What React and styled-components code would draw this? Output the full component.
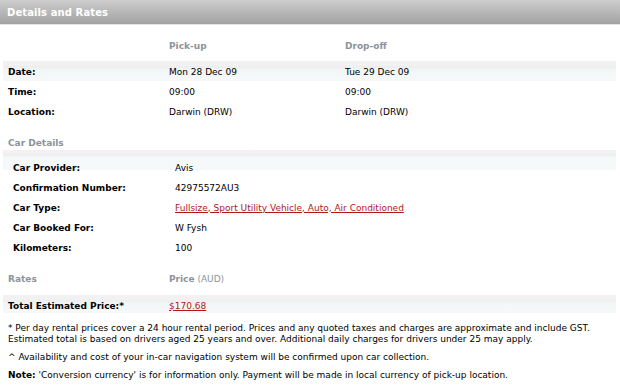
import React from "react";
import styled, { createGlobalStyle } from "styled-components";

const Global = createGlobalStyle`
  html, body { margin: 0; padding: 0; background: #fff; }
  body { font-family: "DejaVu Sans", Verdana, sans-serif; color: #000; }
`;

const Page = styled.div`
  width: 620px;
  height: 385px;
  overflow: hidden;
  background: #fff;
`;

const TitleBar = styled.div`
  height: 24px;
  display: flex;
  align-items: center;
  padding-left: 7px;
  background: linear-gradient(#cdcdcd, #a2a2a2);
  border-bottom: 1px solid #e4e4e4;
  color: #fff;
  font-weight: bold;
  font-size: 10px;
  letter-spacing: 0.1px;
`;

const Body = styled.div`
  padding: 0 4px 0 3px;
`;

const bandBg = "linear-gradient(#f1f1f1 0, #f2f2f2 25%, #ececec 26%, #f3f6f6 45%, #f5f9f9 100%)";

const Row = styled.div`
  display: grid;
  grid-template-columns: ${(p) => (p.$indent ? "162px 176px 1fr" : "161px 176px 1fr")};
  align-items: ${(p) => (p.$end ? "end" : "center")};
  height: ${(p) => p.$h || 20}px;
  box-sizing: border-box;
  padding-left: ${(p) => (p.$indent ? 10 : 5)}px;
  padding-top: ${(p) => p.$pt || 0}px;
  padding-bottom: ${(p) => p.$pb || 0}px;
  margin-top: ${(p) => p.$mt || 0}px;
  font-size: 9px;
  background: ${(p) =>
    p.$band
      ? bandBg
      : p.$bandTail
      ? "linear-gradient(#f4f8f8 0, #f5f9f9 13px, transparent 13px)"
      : "none"};
`;

const Label = styled.span`
  font-weight: bold;
`;

const Value = styled.span`
  grid-column: ${(p) => (p.$wide ? "2 / 4" : "auto")};
`;

const ColHead = styled.span`
  color: #8b939b;
  font-weight: ${(p) => (p.$light ? "normal" : "bold")};
`;

const Section = styled.div`
  height: ${(p) => p.$h}px;
  box-sizing: border-box;
  display: flex;
  align-items: flex-end;
  padding: 0 0 ${(p) => p.$pb || 0}px 5px;
  font-size: 9px;
  color: #8b939b;
  font-weight: bold;
`;

const Link = styled.a`
  color: #b0181c;
  text-decoration: underline;
  cursor: pointer;
`;

const Notes = styled.div`
  padding: 10px 0 0 5px;
  font-size: 9px;
  line-height: 11px;
  display: flex;
  flex-direction: column;
  gap: 7px;
`;

const Note = styled.p`
  margin: 0;
`;

export default function App() {
  return (
    <Page>
      <Global />
      <TitleBar>Details and Rates</TitleBar>
      <Body>
        <Row $h={36} $end $pb={10}>
          <span />
          <ColHead>Pick-up</ColHead>
          <ColHead>Drop-off</ColHead>
        </Row>
        <Row $band $pt={2}>
          <Label>Date:</Label>
          <Value>Mon 28 Dec 09</Value>
          <Value>Tue 29 Dec 09</Value>
        </Row>
        <Row $pt={2}>
          <Label>Time:</Label>
          <Value>09:00</Value>
          <Value>09:00</Value>
        </Row>
        <Row $pt={2}>
          <Label>Location:</Label>
          <Value>Darwin (DRW)</Value>
          <Value>Darwin (DRW)</Value>
        </Row>
        <Section $h={28} $pb={1}>Car Details</Section>
        <Row $h={7} $mt={1} style={{ background: "linear-gradient(#f1f1f1 0, #f2f2f2 60%, #ececec 61%, #f3f6f6 100%)" }} />
        <Row $indent $bandTail $pt={1}>
          <Label>Car Provider:</Label>
          <Value>Avis</Value>
        </Row>
        <Row $indent $pt={1}>
          <Label>Confirmation Number:</Label>
          <Value>42975572AU3</Value>
        </Row>
        <Row $indent $pt={1}>
          <Label>Car Type:</Label>
          <Value $wide>
            <Link>Fullsize, Sport Utility Vehicle, Auto, Air Conditioned</Link>
          </Value>
        </Row>
        <Row $indent $pt={1}>
          <Label>Car Booked For:</Label>
          <Value>W Fysh</Value>
        </Row>
        <Row $indent $pt={1}>
          <Label>Kilometers:</Label>
          <Value>100</Value>
        </Row>
        <Row $h={31} $end $pb={4}>
          <ColHead>Rates</ColHead>
          <span>
            <ColHead>Price</ColHead> <ColHead $light>(AUD)</ColHead>
          </span>
        </Row>
        <Row $band $h={18} $mt={7} $pt={3}>
          <Label>Total Estimated Price:*</Label>
          <Value>
            <Link>$170.68</Link>
          </Value>
        </Row>
        <Notes>
          <Note>
            * Per day rental prices cover a 24 hour rental period. Prices and any quoted taxes and charges are approximate and include GST.
            <br />
            Estimated total is based on drivers aged 25 years and over. Additional daily charges for drivers under 25 may apply.
          </Note>
          <Note>^ Availability and cost of your in-car navigation system will be confirmed upon car collection.</Note>
          <Note>
            <Label>Note:</Label> 'Conversion currency' is for information only. Payment will be made in local currency of pick-up location.
          </Note>
        </Notes>
      </Body>
    </Page>
  );
}
